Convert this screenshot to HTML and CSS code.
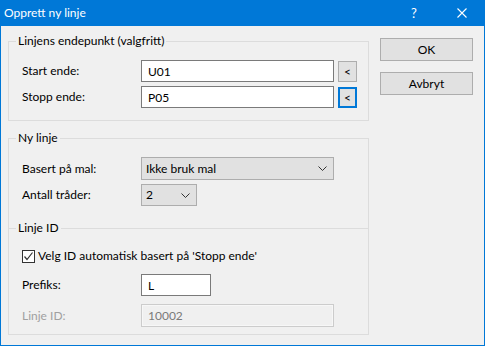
FILE: index.html
```html
<!DOCTYPE html>
<html lang="no">
<head>
    <meta charset="UTF-8">
    <title>Opprett ny linje</title>
    <link rel="stylesheet" href="styles.css">
</head>
<body>
    <div class="window">
        <div class="titlebar">
            <span class="title">Opprett ny linje</span>
            <span class="help">?</span>
            <svg class="close" width="10" height="10" viewBox="0 0 10 10">
                <path d="M0.5 0.5 L9.5 9.5 M9.5 0.5 L0.5 9.5" stroke="#fff" stroke-width="1.1" fill="none"/>
            </svg>
        </div>
        <div class="content">
            <div class="main">
                <fieldset class="group group-ends">
                    <legend>Linjens endepunkt (valgfritt)</legend>
                    <div class="row">
                        <label for="start">Start ende:</label>
                        <input type="text" id="start" class="field wide" value="U01">
                        <button class="pick">&lt;</button>
                    </div>
                    <div class="row">
                        <label for="stopp">Stopp ende:</label>
                        <input type="text" id="stopp" class="field wide" value="P05">
                        <button class="pick focused">&lt;</button>
                    </div>
                </fieldset>

                <fieldset class="group group-line">
                    <legend>Ny linje</legend>
                    <div class="row row-combo">
                        <label>Basert på mal:</label>
                        <div class="combo wide">
                            <span>Ikke bruk mal</span>
                            <svg width="9" height="5" viewBox="0 0 9 5"><path d="M0.5 0.5 L4.5 4.5 L8.5 0.5" stroke="#333" fill="none"/></svg>
                        </div>
                    </div>
                    <div class="row">
                        <label>Antall tråder:</label>
                        <div class="combo small">
                            <span>2</span>
                            <svg width="9" height="5" viewBox="0 0 9 5"><path d="M0.5 0.5 L4.5 4.5 L8.5 0.5" stroke="#333" fill="none"/></svg>
                        </div>
                    </div>

                    <div class="separator"><span>Linje ID</span></div>

                    <div class="check-row">
                        <span class="checkbox">
                            <svg width="11" height="11" viewBox="0 0 11 11"><path d="M1.5 5.5 L4 8.5 L9.5 1.5" stroke="#333" stroke-width="1.2" fill="none"/></svg>
                        </span>
                        <span>Velg ID automatisk basert på 'Stopp ende'</span>
                    </div>
                    <div class="row row-prefix">
                        <label for="prefiks">Prefiks:</label>
                        <input type="text" id="prefiks" class="field short" value="L">
                    </div>
                    <div class="row row-id">
                        <label class="disabled">Linje ID:</label>
                        <input type="text" class="field wide disabled-field" value="10002" disabled>
                    </div>
                </fieldset>
            </div>
            <div class="side">
                <button class="btn">OK</button>
                <button class="btn">Avbryt</button>
            </div>
        </div>
    </div>
</body>
</html>
```

FILE: styles.css
```css
* {
    box-sizing: border-box;
}
body {
    margin: 0;
    font-family: Lato, "Segoe UI", sans-serif;
    font-size: 12px;
    line-height: 16px;
    color: #000;
    background: #f0f0f0;
}
.window {
    width: 485px;
    height: 346px;
    background: #f0f0f0;
    border: 1px solid #0078d7;
    border-top: none;
    display: flex;
    flex-direction: column;
}
.titlebar {
    height: 26px;
    background: #0078d7;
    color: #fff;
    display: flex;
    align-items: center;
    padding-left: 4px;
    margin: 0 -1px;
}
.title {
    flex: 1;
}
.help {
    width: 14px;
    margin-right: 36px;
    text-align: center;
    font-size: 13px;
}
.close {
    margin-right: 18px;
}
.content {
    display: flex;
    padding: 7px 0 0 7px;
    gap: 11px;
}
.main {
    width: 361px;
}
.group {
    margin: 0;
    border: 1px solid #dcdcdc;
    padding: 11px 0 12px 13px;
    min-width: 0;
}
.group legend {
    padding: 0 2px;
    margin-left: -6px;
    line-height: 16px;
}
.group-line {
    margin-top: 9px;
    padding-bottom: 7px;
}
.row {
    display: flex;
    align-items: center;
    height: 22px;
}
.row + .row {
    margin-top: 4px;
}
.row label {
    width: 119px;
}
.field {
    height: 22px;
    border: 1px solid #7a7a7a;
    background: #fff;
    font: inherit;
    padding: 0 6px;
    color: #000;
    outline: none;
}
.wide {
    width: 193px;
}
.short {
    width: 70px;
}
.pick {
    width: 19px;
    height: 21px;
    margin-left: 4px;
    border: 1px solid #adadad;
    background: #e1e1e1;
    font: inherit;
    padding: 0;
    margin-top: 1px;
}
.pick.focused {
    border: 2px solid #0078d7;
}
.row-combo {
    height: 23px;
}
.combo {
    height: 23px;
    background: #e1e1e1;
    border: 1px solid #adadad;
    display: flex;
    align-items: center;
    justify-content: space-between;
    padding: 0 6px 0 4px;
}
.combo.small {
    width: 56px;
    height: 22px;
}
.separator {
    display: flex;
    align-items: center;
    margin: 14px 0 0 -14px;
    width: 361px;
}
.separator::before,
.separator::after {
    content: "";
    height: 1px;
    background: #dcdcdc;
}
.separator::before {
    width: 8px;
}
.separator::after {
    flex: 1;
}
.separator span {
    padding: 0 2px;
}
.check-row {
    display: flex;
    align-items: center;
    margin-top: 12px;
    gap: 3px;
}
.checkbox {
    width: 13px;
    height: 13px;
    border: 1px solid #333;
    background: #fff;
    display: flex;
    align-items: center;
    justify-content: center;
}
.row-prefix {
    margin-top: 10px;
}
.row.row-id {
    margin-top: 8px;
    height: 23px;
}
.row-id .field {
    height: 23px;
}
.disabled {
    color: #a0a0a0;
}
.disabled-field {
    border-color: #cccccc;
    background: #f0f0f0;
    color: #7a7a7a;
    box-shadow: inset 0 0 0 1px #f7f7f7;
}
.side {
    display: flex;
    flex-direction: column;
    gap: 11px;
    padding-top: 5px;
}
.btn {
    width: 93px;
    height: 23px;
    border: 1px solid #adadad;
    background: #e1e1e1;
    font: inherit;
    color: #000;
    padding: 0;
}
```
